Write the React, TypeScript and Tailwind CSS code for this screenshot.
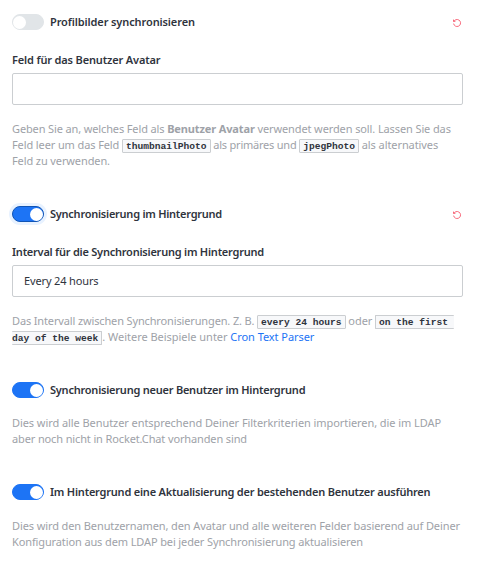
import type { ReactNode } from "react";

function Toggle({ on = false, focused = false }: { on?: boolean; focused?: boolean }) {
  return (
    <button
      type="button"
      role="switch"
      aria-checked={on}
      className={`flex h-4 w-8 shrink-0 items-center rounded-full border ${
        on ? "justify-end bg-[#1d74f5]" : "justify-start bg-[#e1e5e8]"
      } ${
        focused
          ? "border-[#1054b5] shadow-[0_0_0_3px_#e8f2ff]"
          : on
            ? "border-[#1d74f5]"
            : "border-[#e1e5e8]"
      }`}
    >
      <span className="size-[13px] rounded-full bg-white" />
    </button>
  );
}

function ResetIcon() {
  return (
    <svg className="size-2.5" viewBox="0 0 10 10" fill="none" stroke="#f5455c" strokeWidth="0.8">
      <path d="M1.6 5.6a3.5 3.5 0 1 0 1-3.1L1.6 3.2M1.5 1.6v1.8h1.9" />
    </svg>
  );
}

function Row({ children, on, focused, reset }: { children: ReactNode; on?: boolean; focused?: boolean; reset?: boolean }) {
  return (
    <div className="flex h-4 items-center">
      <Toggle on={on} focused={focused} />
      <div className="ml-1.5 grow text-[11px] font-semibold whitespace-nowrap">{children}</div>
      {reset && (
        <button type="button" aria-label="Zurücksetzen" className="mt-0.5 mr-px">
          <ResetIcon />
        </button>
      )}
    </div>
  );
}

function Line({ children }: { children: ReactNode }) {
  return <div className="flex h-4 items-center whitespace-pre">{children}</div>;
}

function Code({ children, edge = "border px-[3px]" }: { children: ReactNode; edge?: string }) {
  return (
    <code
      className={`mt-0.5 flex h-3.5 items-center rounded-[1px] border-[#cbced1] bg-[#f7f8fa] pt-px font-['Liberation_Mono',monospace] text-[9.6px] font-bold tracking-normal text-[#2f343d] ${edge}`}
    >
      {children}
    </code>
  );
}

export default function App() {
  return (
    <main className="flex h-[573px] w-[484px] flex-col bg-white pt-3.5 pr-[21px] pl-3 font-['Noto_Sans',sans-serif] text-[11px] leading-4 text-[#2f343d]">
      <Row reset><span className="tracking-[-0.11px]">Profilbilder synchronisieren</span></Row>
      <label className="mt-[22px] h-4 font-semibold whitespace-nowrap"><span className="tracking-[-0.15px]">Feld für das Benutzer Avatar</span></label>
      <input className="mt-[5px] h-8 shrink-0 rounded-[2px] border border-[#cbced1] px-[11px] outline-none" />
      <div className="mt-4 text-[#9ea2a8]">
        <Line>
          <span className="tracking-[-0.13px]">Geben Sie an, welches Feld als </span>
          <b className="tracking-[-0.13px]">Benutzer Avatar</b>
          <span className="tracking-[-0.11px]"> verwendet werden soll. Lassen Sie das</span>
        </Line>
        <Line>
          <span className="tracking-[-0.11px]">Feld leer um das Feld </span>
          <Code>thumbnailPhoto</Code>
          <span className="tracking-[-0.22px]"> als primäres und </span>
          <Code>jpegPhoto</Code>
          <span className="tracking-[-0.08px]"> als alternatives</span>
        </Line>
        <Line><span className="tracking-[-0.11px]">Feld zu verwenden.</span></Line>
      </div>
      <div className="mt-[37px]">
        <Row on focused reset><span className="tracking-[-0.25px]">Synchronisierung im Hintergrund</span></Row>
      </div>
      <label className="mt-[22px] h-4 font-semibold whitespace-nowrap"><span className="tracking-[-0.23px]">Interval für die Synchronisierung im Hintergrund</span></label>
      <input
        defaultValue="Every 24 hours"
        className="mt-[5px] h-8 shrink-0 rounded-[2px] border border-[#cbced1] px-[11px] pb-0.5 tracking-[-0.14px] outline-none"
      />
      <div className="mt-4 text-[#9ea2a8]">
        <Line>
          <span className="tracking-[-0.14px]">Das Intervall zwischen Synchronisierungen. Z. B. </span>
          <Code>every 24 hours</Code>
          <span className="tracking-[-0.08px]"> oder </span>
          <Code edge="border-y border-l pl-[3px]">{"on the first "}</Code>
        </Line>
        <Line>
          <Code edge="border-y border-r pr-[3px]">day of the week</Code>
          <span className="tracking-[-0.03px]">. Weitere Beispiele unter </span>
          <a className="tracking-[-0.06px] text-[#1d74f5]">Cron Text Parser</a>
        </Line>
      </div>
      <div className="mt-[37px]">
        <Row on><span className="tracking-[-0.23px]">Synchronisierung neuer Benutzer im Hintergrund</span></Row>
      </div>
      <div className="mt-[17px] text-[#9ea2a8]">
        <Line><span className="tracking-[-0.07px]">Dies wird alle Benutzer entsprechend Deiner Filterkriterien importieren, die im LDAP</span></Line>
        <Line><span className="tracking-[-0.13px]">aber noch nicht in Rocket.Chat vorhanden sind</span></Line>
      </div>
      <div className="mt-[37px]">
        <Row on><span className="tracking-[-0.215px]">Im Hintergrund eine Aktualisierung der bestehenden Benutzer ausführen</span></Row>
      </div>
      <div className="mt-[18px] text-[#9ea2a8]">
        <Line><span className="tracking-[-0.105px]">Dies wird den Benutzernamen, den Avatar und alle weiteren Felder basierend auf Deiner</span></Line>
        <Line><span className="tracking-[-0.12px]">Konfiguration aus dem LDAP bei jeder Synchronisierung aktualisieren</span></Line>
      </div>
    </main>
  );
}
